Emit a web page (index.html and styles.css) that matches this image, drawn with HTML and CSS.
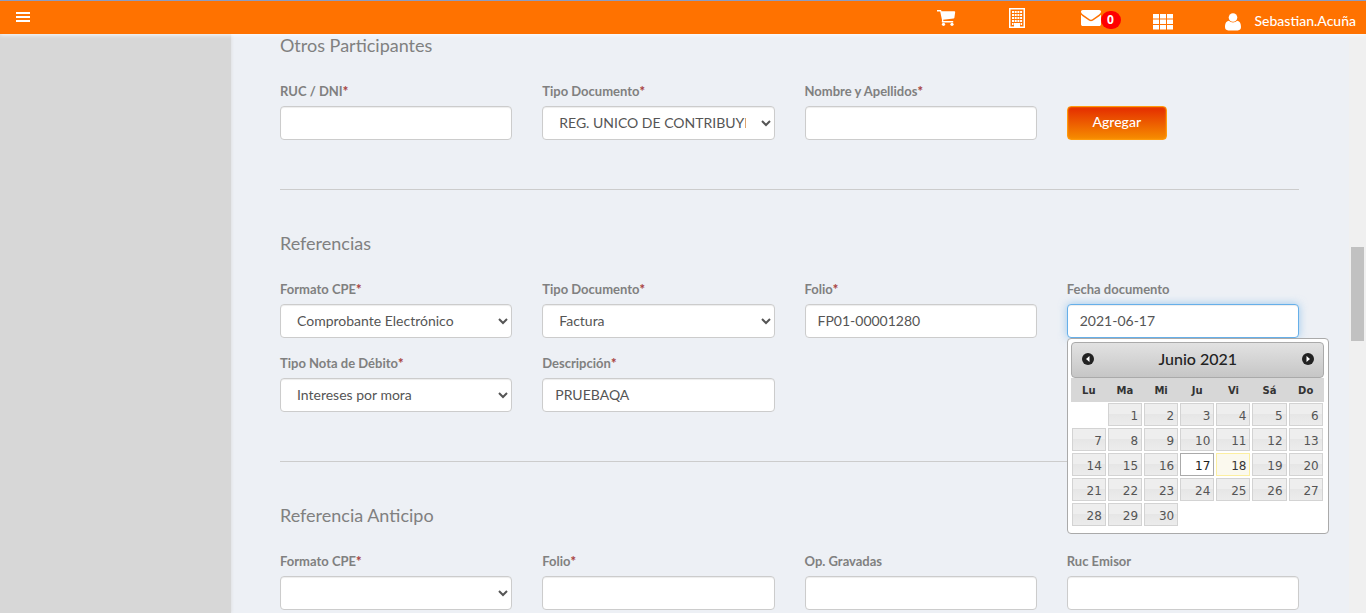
FILE: index.html
```html
<!DOCTYPE html>
<html lang="es">
<head>
<meta charset="utf-8">
<meta name="viewport" content="width=device-width, initial-scale=1">
<title>Nota de Débito</title>
<link rel="stylesheet" href="styles.css">
</head>
<body>
<div class="app">
  <header class="topbar">
    <button class="menu-toggle" type="button" aria-label="Menú">
      <svg width="14" height="12" viewBox="0 0 14 12"><path fill="currentColor" d="M0 1h14v2H0zM0 5h14v2H0zM0 9h14v2H0z"/></svg>
    </button>
    <nav class="tools">
      <a class="tool" href="#" aria-label="Carrito">
        <svg width="19" height="18" viewBox="0 0 19 18"><path fill="currentColor" d="M0 1h3.600c.6 0 .8.600.9 1.300H17.400c.5 0 .8.300.8.800l-.8 5.600c-.1.500-.4.800-.8.800L6.200 10.700l.2 1.300H16.200v1.500H5.600c-.6 0-.9-.5-.8-1.100l.3-1L3.200 2.500H0z"/><circle cx="6.500" cy="15.300" r="1.600" fill="currentColor"/><circle cx="15" cy="15.300" r="1.600" fill="currentColor"/></svg>
      </a>
      <a class="tool" href="#" aria-label="Empresa">
        <svg width="16" height="20" viewBox="0 0 16 20"><path fill="currentColor" fill-rule="evenodd" d="M0 0h16v20H0zM1.500 1.500v17H5V15h6v3.500h3.500v-17z"/><path fill="currentColor" d="M3 3h2v2H3zM5.700 3h2v2h-2zM8.400 3h2v2h-2zM11.100 3h2v2h-2zM3 6h2v2H3zM5.700 6h2v2h-2zM8.400 6h2v2h-2zM11.100 6h2v2h-2zM3 9h2v2H3zM5.700 9h2v2h-2zM8.400 9h2v2h-2zM11.100 9h2v2h-2zM3 12h2v2H3zM5.700 12h2v2h-2zM8.400 12h2v2h-2zM11.100 12h2v2h-2zM3 15h1.500v2H3zM11.600 15h1.500v2h-1.500zM6.300 16h3.400v3H6.300z"/></svg>
      </a>
      <a class="tool" href="#" aria-label="Mensajes">
        <svg width="20" height="16" viewBox="0 0 20 16"><path fill="currentColor" d="M1.800 0h16.400C19.300 0 20 .8 20 1.600c0 1.200-.9 2.200-1.900 3l-6 4.200c-.7.500-1.400 1-2.100 1s-1.400-.5-2.100-1l-6-4.200C1 3.900 0 2.700 0 1.800 0 .8.700 0 1.800 0zM0 4.800c.4.400.8.800 1.300 1.100l5.500 3.900c.9.700 2 1.400 3.200 1.400s2.300-.7 3.200-1.400l5.500-3.900c.5-.3.900-.7 1.300-1.100v9.400c0 1-.8 1.800-1.800 1.800H1.800C.8 16 0 15.200 0 14.200z"/></svg>
        <span class="badge">0</span>
      </a>
      <a class="tool" href="#" aria-label="Aplicaciones">
        <svg class="icon-low" width="20" height="16" viewBox="0 0 20 16"><path fill="currentColor" d="M0 0h6v4.500H0zM7 0h6v4.500H7zM14 0h6v4.500h-6zM0 5.500h6V10H0zM7 5.500h6V10H7zM14 5.500h6V10h-6zM0 11h6v4.500H0zM7 11h6v4.500H7zM14 11h6v4.500h-6z"/></svg>
      </a>
      <a class="user" href="#">
        <svg class="icon-low" width="16" height="18" viewBox="0 0 16 18"><circle cx="8" cy="4.500" r="4.300" fill="currentColor"/><path fill="currentColor" d="M4 7.800c2.300 2.300 5.700 2.300 8 0 3 .2 4 3.300 4 6.300 0 2.100-1.300 3.300-3.200 3.300H3.200C1.300 17.400 0 16.200 0 14.100c0-3 1-6.100 4-6.300z"/></svg>
        <span>Sebastian.Acuña</span>
      </a>
    </nav>
  </header>
  <div class="body">
    <aside class="sidebar"></aside>
    <main class="content">
      <section class="section">
        <h2 class="title">Otros Participantes</h2>
        <div class="fields">
          <div class="field"><label for="ruc">RUC / DNI<b class="req">*</b></label><input class="control" id="ruc" type="text"></div>
          <div class="field"><label for="tipo1">Tipo Documento<b class="req">*</b></label><select class="control" id="tipo1"><option>REG. UNICO DE CONTRIBUYENTES</option></select></div>
          <div class="field"><label for="nombre">Nombre y Apellidos<b class="req">*</b></label><input class="control" id="nombre" type="text"></div>
          <div class="field action"><button class="add" type="button">Agregar</button></div>
        </div>
      </section>
      <section class="section">
        <h2 class="title">Referencias</h2>
        <div class="fields">
          <div class="field"><label for="formato">Formato CPE<b class="req">*</b></label><select class="control" id="formato"><option>Comprobante Electrónico</option></select></div>
          <div class="field"><label for="tipo2">Tipo Documento<b class="req">*</b></label><select class="control" id="tipo2"><option>Factura</option></select></div>
          <div class="field"><label for="folio">Folio<b class="req">*</b></label><input class="control" id="folio" type="text" value="FP01-00001280"></div>
          <div class="field"><label for="fecha">Fecha documento</label><input class="control active" id="fecha" type="text" value="2021-06-17">
            <div class="calendar">
              <div class="cal-head">
                <button class="cal-nav" type="button" aria-label="Anterior"><svg width="12" height="12" viewBox="0 0 12 12"><circle cx="6" cy="6" r="6" fill="#222"/><path fill="#fff" d="M7.500 3v6L4 6z"/></svg></button>
                <span>Junio 2021</span>
                <button class="cal-nav" type="button" aria-label="Siguiente"><svg width="12" height="12" viewBox="0 0 12 12"><circle cx="6" cy="6" r="6" fill="#222"/><path fill="#fff" d="M4.500 3v6L8 6z"/></svg></button>
              </div>
              <table class="cal-table">
                <thead><tr><th>Lu</th><th>Ma</th><th>Mi</th><th>Ju</th><th>Vi</th><th>Sá</th><th>Do</th></tr></thead>
                <tbody>
                  <tr><td></td><td><a href="#">1</a></td><td><a href="#">2</a></td><td><a href="#">3</a></td><td><a href="#">4</a></td><td><a href="#">5</a></td><td><a href="#">6</a></td></tr>
                  <tr><td><a href="#">7</a></td><td><a href="#">8</a></td><td><a href="#">9</a></td><td><a href="#">10</a></td><td><a href="#">11</a></td><td><a href="#">12</a></td><td><a href="#">13</a></td></tr>
                  <tr><td><a href="#">14</a></td><td><a href="#">15</a></td><td><a href="#">16</a></td><td><a class="selected" href="#">17</a></td><td><a class="today" href="#">18</a></td><td><a href="#">19</a></td><td><a href="#">20</a></td></tr>
                  <tr><td><a href="#">21</a></td><td><a href="#">22</a></td><td><a href="#">23</a></td><td><a href="#">24</a></td><td><a href="#">25</a></td><td><a href="#">26</a></td><td><a href="#">27</a></td></tr>
                  <tr><td><a href="#">28</a></td><td><a href="#">29</a></td><td><a href="#">30</a></td><td></td><td></td><td></td><td></td></tr>
                </tbody>
              </table>
            </div>
          </div>
          <div class="field"><label for="nota">Tipo Nota de Débito<b class="req">*</b></label><select class="control" id="nota"><option>Intereses por mora</option></select></div>
          <div class="field"><label for="desc">Descripción<b class="req">*</b></label><input class="control" id="desc" type="text" value="PRUEBAQA"></div>
        </div>
      </section>
      <section class="section">
        <h2 class="title">Referencia Anticipo</h2>
        <div class="fields">
          <div class="field"><label for="formato2">Formato CPE<b class="req">*</b></label><select class="control" id="formato2"><option></option></select></div>
          <div class="field"><label for="folio2">Folio<b class="req">*</b></label><input class="control" id="folio2" type="text"></div>
          <div class="field"><label for="gravadas">Op. Gravadas</label><input class="control" id="gravadas" type="text"></div>
          <div class="field"><label for="emisor">Ruc Emisor</label><input class="control" id="emisor" type="text"></div>
        </div>
      </section>
    </main>
    <div class="track"><div class="thumb"></div></div>
  </div>
</div>
</body>
</html>
```
FILE: styles.css
```css
* { box-sizing: border-box; }
body {
  margin: 0;
  font: 14px/20px Lato, "Open Sans", sans-serif;
  color: #555;
  background: #edf0f5;
}
.app { display: flex; flex-direction: column; height: 100vh; overflow: hidden; }

.topbar {
  display: flex;
  justify-content: space-between;
  flex: none;
  height: 34px;
  padding: 0 10px 0 16px;
  color: #fff;
  background: #ff7200;
  border-top: 1px solid #8c9cc0;
  box-shadow: 0 1px 4px rgba(255, 255, 255, 0.9);
  position: relative;
}
.menu-toggle { display: flex; align-items: center; padding: 0 0 2px; border: 0; color: inherit; background: none; }
.tools { display: flex; align-items: center; }
.tool { display: flex; align-items: center; width: 72px; color: inherit; text-decoration: none; }
.badge {
  width: 20px;
  height: 18px;
  margin-top: 4px;
  font: bold 12px/18px "Open Sans", sans-serif;
  text-align: center;
  background: #f00;
  border-radius: 9px;
}
.icon-low { margin-top: 8px; }
.user { display: flex; align-items: center; gap: 14px; color: inherit; text-decoration: none; font-weight: 500; }
.user span { margin-top: 6px; }

.body { display: flex; flex: 1; min-height: 0; }
.sidebar { flex: none; width: 231px; background: #d7d7d7; box-shadow: 0 0 3px #d7d7d7; }
.content { flex: 1; min-width: 0; overflow: hidden; padding: 0 50px 0 49px; }
.track { flex: none; width: 17px; padding: 213px 2px 0; background: #f0f0f0; }
.thumb { height: 94px; background: #c1c1c1; }

.section { padding-bottom: 49px; margin-bottom: 42px; border-bottom: 1px solid #ccc; }
.title { margin: 0 0 25px; font-size: 18px; line-height: 22px; font-weight: 400; color: #808080; }
.fields { display: grid; grid-template-columns: repeat(4, minmax(0, 1fr)); gap: 15px 30px; }
.field { position: relative; display: flex; flex-direction: column; gap: 5px; }
.field label { font-size: 13px; line-height: 20px; font-weight: 700; color: #808080; }
.req { color: #a94442; }
.control {
  width: 100%;
  height: 34px;
  padding: 5px 12px 7px;
  font: 14px/20px Lato, "Open Sans", sans-serif;
  color: #555;
  background: #fff;
  border: 1px solid #ccc;
  border-radius: 4px;
  box-shadow: inset 0 1px 1px rgba(0, 0, 0, 0.075);
}
.active { border-color: #66afe9; box-shadow: inset 0 1px 1px rgba(0, 0, 0, 0.075), 0 0 8px rgba(102, 175, 233, 0.6); }
.action { justify-content: flex-end; align-items: flex-start; }
.add {
  width: 100px;
  height: 34px;
  padding: 0 0 2px;
  font: 500 14px/20px Lato, sans-serif;
  color: #fff;
  background: linear-gradient(#e42c00, #f68c00);
  border: 1px solid #ff9a0c;
  border-radius: 4px;
  box-shadow: inset 0 0 2px #ff9a0c;
}

.calendar {
  position: absolute;
  top: 100%;
  left: 0;
  z-index: 2;
  width: 262px;
  padding: 3px 4px 6px 3px;
  background: #fff;
  border: 1px solid #aaa;
  border-radius: 4px;
}
.cal-head {
  display: flex;
  align-items: center;
  justify-content: space-between;
  height: 36px;
  padding: 0 9px 2px 10px;
  font-size: 16px;
  font-weight: 500;
  color: #222;
  background: linear-gradient(#e2e2e2, #c6c6c6);
  border: 1px solid #aaa;
  border-radius: 4px;
}
.cal-nav { display: flex; padding: 0; border: 0; background: none; }
.cal-table { width: 100%; table-layout: fixed; border-collapse: collapse; font-family: "DejaVu Sans", sans-serif; }
.cal-table th { height: 24px; padding: 2px 0 0; font-size: 10px; line-height: 22px; color: #333; background: #d7d7d7; }
.cal-table td { height: 25px; padding: 1px; }
.cal-table a {
  display: block;
  height: 23px;
  padding: 1px 3px 0 0;
  font-size: 12px;
  line-height: 22px;
  text-align: right;
  text-decoration: none;
  color: #555;
  background: linear-gradient(#eee 50%, #e6e6e6 50%, #ececec);
  border: 1px solid #d3d3d3;
}
.cal-table .selected { color: #212121; background: #fff; border-color: #aaa; }
.cal-table .today { color: #363636; background: #fbf9ee; border-color: #fcefa1; }
```
